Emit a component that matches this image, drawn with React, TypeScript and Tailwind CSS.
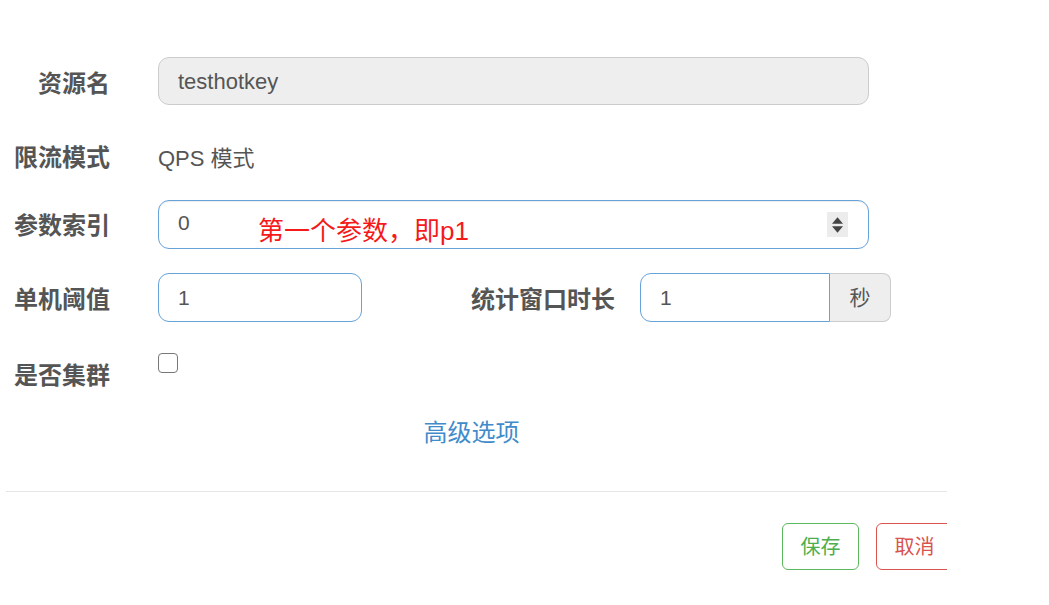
export default function App() {
  const font = { fontFamily: '"Liberation Sans", Arial, "Noto Sans CJK SC", sans-serif' };
  const label = "w-[110px] shrink-0 text-right text-[24px] font-bold text-[#555]";
  return (
    <div className="w-[947px] overflow-hidden bg-white pt-[57px] pb-[36px]" style={font}>
      {/* 资源名 */}
      <div className="flex h-[48px] items-center">
        <div className={`${label} mt-[5px]`}>资源名</div>
        <div className="ml-[48px] flex h-[48px] w-[711px] items-center rounded-[11px] border border-[#ccc] bg-[#eee] px-[19px] text-[22px] text-[#555]">
          testhotkey
        </div>
      </div>

      {/* 限流模式 */}
      <div className="mt-[29px] flex h-[48px] items-center">
        <div className={label}>限流模式</div>
        <div className="ml-[48px] text-[22px] text-[#555]">QPS 模式</div>
      </div>

      {/* 参数索引 */}
      <div className="mt-[18px] flex h-[49px] items-center">
        <div className={`${label} mt-[3px]`}>参数索引</div>
        <div className="relative ml-[48px] flex h-[49px] w-[711px] items-center rounded-[11px] border border-[#66a3d9] px-[19px] text-[21px] text-[#555] shadow-[inset_0_1px_1px_rgba(0,0,0,0.075)]">
          <span className="-mt-[4px]">0</span>
          <span className="absolute left-[99px] top-[15px] text-[26px] leading-[30px] text-[#f51a1a]">第一个参数，即p1</span>
          <div className="absolute right-[20px] top-[11px] flex h-[25px] w-[21px] flex-col items-center justify-center gap-[2px] bg-[#ececec]">
            <svg width="11" height="7" viewBox="0 0 10 6"><path d="M5 0L10 6H0Z" fill="#444" /></svg>
            <svg width="11" height="7" viewBox="0 0 10 6"><path d="M0 0H10L5 6Z" fill="#444" /></svg>
          </div>
        </div>
      </div>

      {/* 单机阈值 / 统计窗口时长 */}
      <div className="mt-[24px] flex h-[49px] items-center">
        <div className={`${label} mt-[4px]`}>单机阈值</div>
        <div className="ml-[48px] flex h-[49px] w-[204px] items-center rounded-[11px] border border-[#66a3d9] px-[19px] text-[21px] text-[#555]">
          1
        </div>
        <div className="ml-[100px] mt-[4px] w-[153px] shrink-0 text-right text-[24px] font-bold text-[#555]">统计窗口时长</div>
        <div className="ml-[25px] flex h-[49px]">
          <div className="flex w-[190px] items-center rounded-l-[11px] border border-[#66a3d9] px-[19px] text-[21px] text-[#555]">1</div>
          <div className="flex w-[61px] items-center justify-center rounded-r-[8px] border border-l-0 border-[#ccc] bg-[#eee] text-[21px] text-[#555]">
            秒
          </div>
        </div>
      </div>

      {/* 是否集群 */}
      <div className="mt-[30px] flex h-[48px] items-start">
        <div className={`${label} flex h-[48px] items-center justify-end`}>是否集群</div>
        <div className="ml-[48px] mt-[1px] h-[20px] w-[20px] rounded-[4px] border-[1.5px] border-[#777] bg-white" />
      </div>

      {/* 高级选项 */}
      <div className="mt-[18px] flex h-[30px] items-center justify-center">
        <span className="ml-[-4px] text-[24px] leading-[30px] text-[#428bca]">高级选项</span>
      </div>

      <div className="ml-[6px] mt-[43px] h-px bg-[#e5e5e5]" />

      <div className="mt-[31px] mr-[-6px] flex justify-end gap-[17px]">
        <button className="flex h-[47px] w-[77px] items-center justify-center rounded-[6px] border border-[#5cb85c] bg-white text-[20px] text-[#4cae4c]">
          保存
        </button>
        <button className="flex h-[47px] w-[77px] items-center justify-center rounded-[6px] border border-[#d9534f] bg-white text-[20px] text-[#d9534f]">
          取消
        </button>
      </div>
    </div>
  );
}
